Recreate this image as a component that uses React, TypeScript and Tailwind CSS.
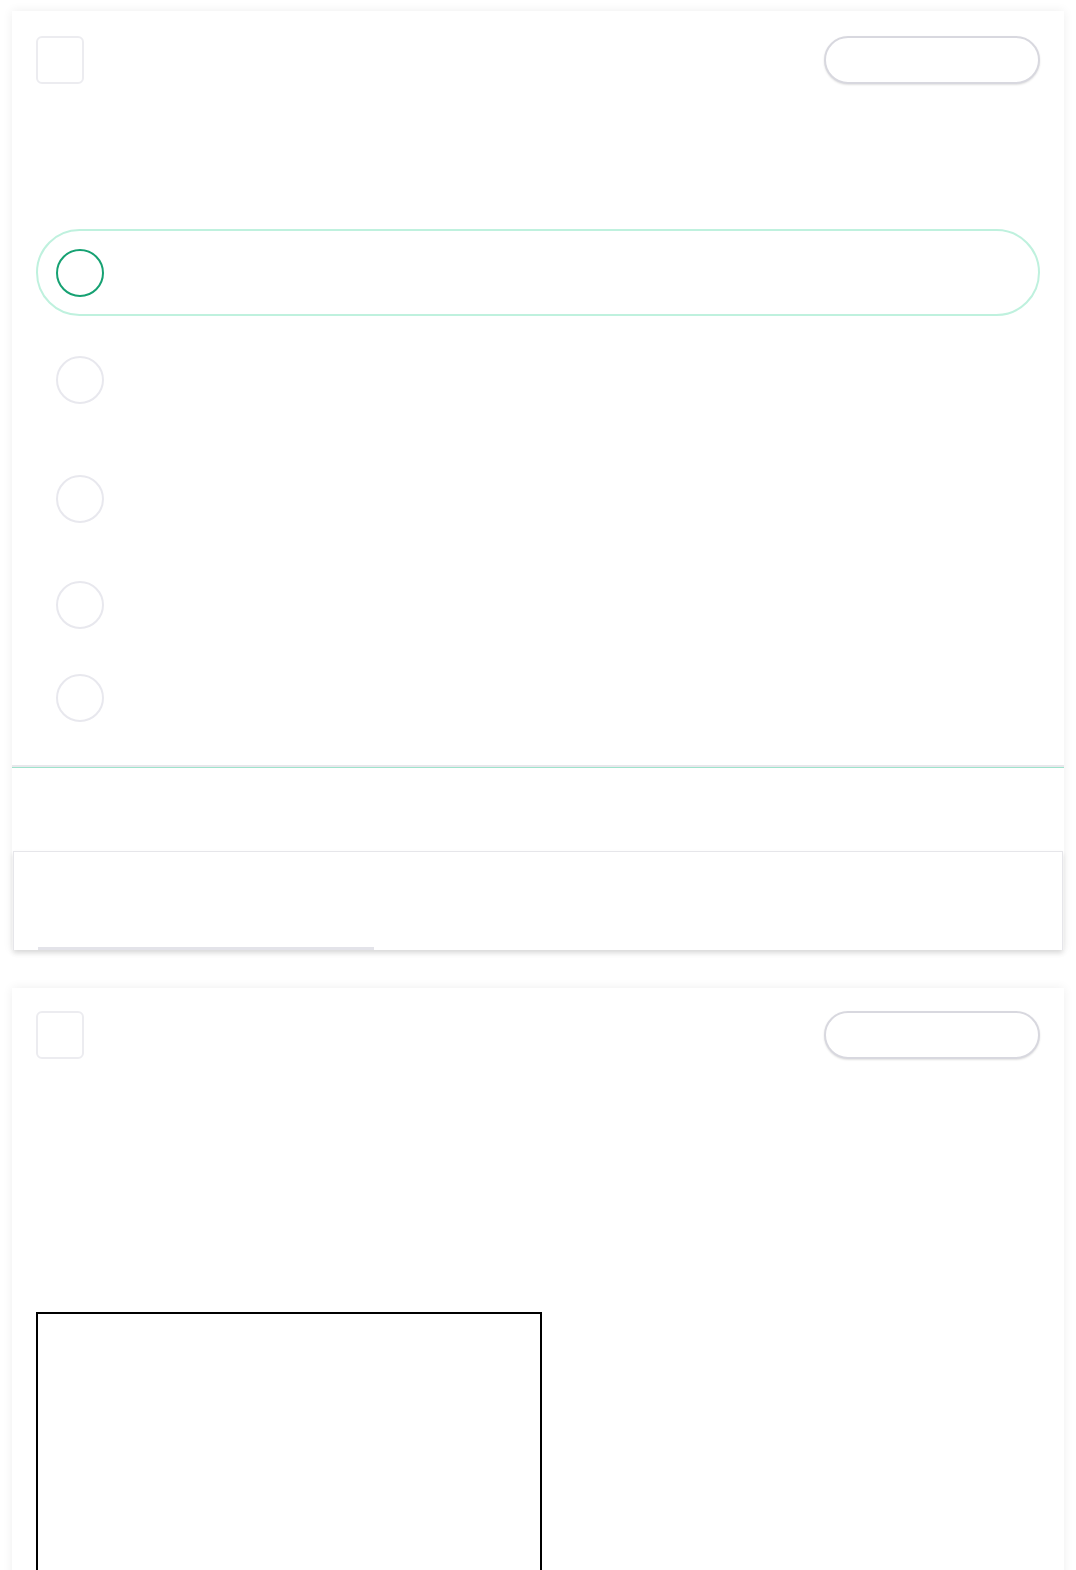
import React from "react";

// Empty skeleton of a quiz question card (option rows) and the next card below it

function Header() {
  return (
    <div className="flex items-center justify-between">
      <div className="h-12 w-12 rounded-md border-2 border-[#ececf0] bg-white" />
      <div className="h-12 w-[216px] rounded-full border-2 border-[#d8d8df] bg-white shadow-[0_1px_2px_rgba(0,0,0,0.12)]" />
    </div>
  );
}

function Radio({ active = false }: { active?: boolean }) {
  return (
    <div
      className={
        active
          ? "h-12 w-12 shrink-0 rounded-full border-2 border-[#16a172] bg-white"
          : "h-12 w-12 shrink-0 rounded-full border-2 border-[#e8e8ee] bg-white"
      }
    />
  );
}

export default function App() {
  return (
    <div className="min-h-[1570px] bg-white px-3 pt-[11px] font-['Liberation_Sans',sans-serif]">
      {/* Card 1 */}
      <div className="bg-white shadow-[0_0_10px_rgba(0,0,0,0.07)]">
        <div className="px-6 pt-[25px]">
          <Header />

          {/* options */}
          <div className="mt-[145px] flex flex-col">
            <div className="flex h-[87px] items-center rounded-full border-2 border-[#bff1de] pl-[18px]">
              <Radio active />
            </div>
            <div className="mt-[40px] flex pl-5">
              <Radio />
            </div>
            <div className="mt-[71px] flex pl-5">
              <Radio />
            </div>
            <div className="mt-[58px] flex pl-5">
              <Radio />
            </div>
            <div className="mt-[45px] flex pl-5">
              <Radio />
            </div>
          </div>
        </div>

        <div className="mt-[43px] border-t-2 border-[#e8e8ec]" />
        <div className="border-t border-[#9fe3cc]" />
        <div className="h-[83px]" />

        <div className="mx-px border border-b-0 border-[#e6e6ea] bg-white shadow-[0_3px_5px_rgba(0,0,0,0.12)]">
          <div className="h-[95px]" />
          <div className="ml-6 h-[3px] w-[336px] bg-[#e3e3e9]" />
        </div>
      </div>

      {/* Card 2 */}
      <div className="mt-[38px] min-h-[600px] bg-white shadow-[0_0_10px_rgba(0,0,0,0.07)]">
        <div className="px-6 pt-[23px]">
          <Header />
          <div className="mt-[253px] h-[300px] w-[506px] border-2 border-black" />
        </div>
      </div>
    </div>
  );
}
